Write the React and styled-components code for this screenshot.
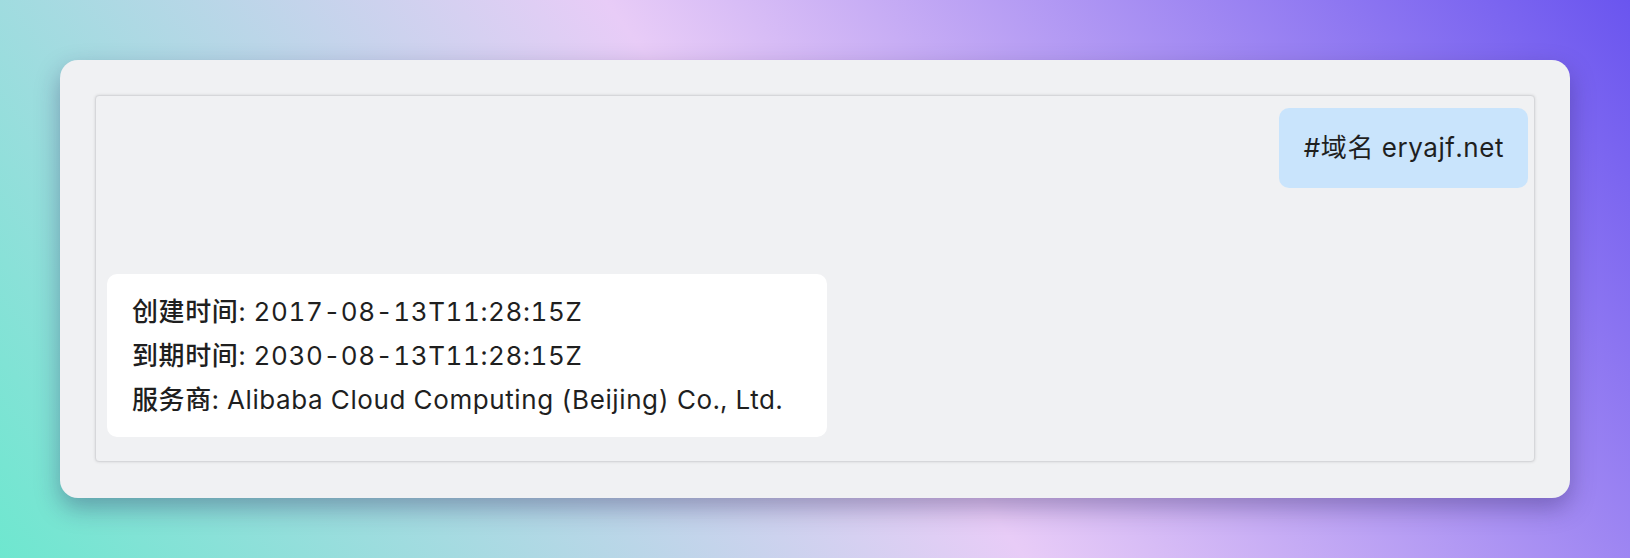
import React from 'react';
import styled, { createGlobalStyle } from 'styled-components';

const GlobalStyle = createGlobalStyle`
  html, body {
    margin: 0;
    padding: 0;
  }
  body {
    font-family: Inter, "Noto Sans CJK SC", sans-serif;
    color: #1f1f1f;
  }
`;

const Page = styled.div`
  box-sizing: border-box;
  width: 1630px;
  height: 558px;
  padding: 60px;
  background: linear-gradient(53deg, #6ee7cf 0%, #e8ccf7 50%, #6a55ef 100%);
`;

const Card = styled.div`
  box-sizing: border-box;
  height: 438px;
  padding: 35px;
  background: #f0f1f3;
  border-radius: 18px;
  box-shadow: 0 10px 24px rgba(40, 30, 90, 0.35);
`;

const ChatBox = styled.div`
  box-sizing: border-box;
  height: 367px;
  display: flex;
  flex-direction: column;
  gap: 86px;
  padding: 12px 6px 24px 11px;
  background: #f0f1f3;
  border: 1px solid #d6d7da;
  border-radius: 4px;
  box-shadow: 0 0 3px rgba(0, 0, 0, 0.12);
`;

const Bubble = styled.div`
  box-sizing: border-box;
  align-self: ${(p) => (p.$mine ? 'flex-end' : 'flex-start')};
  width: ${(p) => (p.$mine ? 'auto' : '720px')};
  padding: ${(p) => (p.$mine ? '18px 24px 18px 25px' : '16px 25px 15px')};
  background: ${(p) => (p.$mine ? '#c9e4fc' : '#ffffff')};
  border-radius: 10px;
  font-size: 26px;
  letter-spacing: 0.6px;
  line-height: 44px;
  font-variant-numeric: tabular-nums;
`;

const Line = styled.div`
  white-space: nowrap;
`;

const Label = styled.span`
  font-weight: 500;
`;

const rows = [
  ['创建时间', '2017-08-13T11:28:15Z'],
  ['到期时间', '2030-08-13T11:28:15Z'],
  ['服务商', 'Alibaba Cloud Computing (Beijing) Co., Ltd.'],
];

export default function App() {
  return (
    <>
      <GlobalStyle />
      <Page>
        <Card>
          <ChatBox>
            <Bubble $mine>#域名 eryajf.net</Bubble>
            <Bubble>
              {rows.map(([k, v]) => (
                <Line key={k}>
                  <Label>{k}</Label>: {v}
                </Line>
              ))}
            </Bubble>
          </ChatBox>
        </Card>
      </Page>
    </>
  );
}
